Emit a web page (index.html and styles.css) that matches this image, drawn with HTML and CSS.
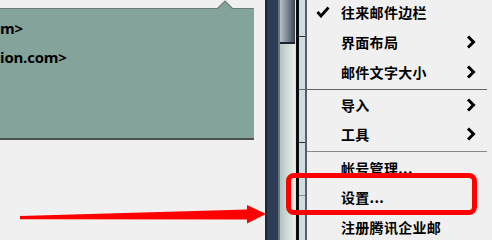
FILE: index.html
```html
<!DOCTYPE html>
<html>
<head>
<meta charset="utf-8">
<link rel="stylesheet" href="styles.css">
</head>
<body>
<div class="screen">
  <div class="left">
    <div class="topstrip">
      <svg class="caret" width="16" height="9" viewBox="0 0 16 9"><path d="M0.5 9 L8 1 L15.5 9 Z" fill="#84a39b"/><path d="M0.5 8.5 L8 1 L15.5 8.5" fill="none" stroke="#6e7c78" stroke-width="1.2"/></svg>
    </div>
    <div class="panel">
      <div class="addr">m&gt;</div>
      <div class="addr">ion.com&gt;</div>
    </div>
  </div>
  <div class="scroll"><div class="thumb"></div></div>
  <div class="edge"></div>
  <div class="menu">
    <div class="item r30"><svg class="check" width="14" height="12" viewBox="0 0 14 12"><path d="M1.5 6 L5 10 L12.5 1.5" fill="none" stroke="#000" stroke-width="2.8"/></svg><span class="label">往来邮件边栏</span></div>
    <div class="item r30"><span></span><span class="label">界面布局</span><svg class="chev" width="10" height="14" viewBox="0 0 10 14"><path d="M2 1.5 L7.5 7 L2 12.5" fill="none" stroke="#000" stroke-width="3"/></svg></div>
    <div class="item r29"><span></span><span class="label">邮件文字大小</span><svg class="chev" width="10" height="14" viewBox="0 0 10 14"><path d="M2 1.5 L7.5 7 L2 12.5" fill="none" stroke="#000" stroke-width="3"/></svg></div>
    <div class="sep sep1"></div>
    <div class="item r29"><span></span><span class="label">导入</span><svg class="chev" width="10" height="14" viewBox="0 0 10 14"><path d="M2 1.5 L7.5 7 L2 12.5" fill="none" stroke="#000" stroke-width="3"/></svg></div>
    <div class="item r29"><span></span><span class="label">工具</span><svg class="chev" width="10" height="14" viewBox="0 0 10 14"><path d="M2 1.5 L7.5 7 L2 12.5" fill="none" stroke="#000" stroke-width="3"/></svg></div>
    <div class="sep sep2"></div>
    <div class="item r29"><span></span><span class="label">帐号管理...</span></div>
    <div class="item r30"><span></span><span class="label">设置...</span></div>
    <div class="item r30"><span></span><span class="label">注册腾讯企业邮</span></div>
  </div>
</div>
<svg class="arrow" width="492" height="240" viewBox="0 0 492 240"><polygon points="20,216 247,209.5 247,205 266,214 247,223.5 247,219.5 20,219.3" fill="#ff0000"/></svg>
<div class="hilite"></div>
</body>
</html>
```

FILE: styles.css
```css
html, body {
  margin: 0;
  padding: 0;
  background: #f0f0f0;
}
body {
  width: 492px;
  height: 240px;
  overflow: hidden;
  position: relative;
}
.screen {
  display: flex;
  width: 492px;
  height: 240px;
}
.left {
  width: 265px;
  flex: none;
  background: #f0f0f0;
}
.topstrip {
  height: 8px;
  display: flex;
  align-items: flex-end;
}
.caret {
  display: block;
  margin-left: 217px;
  margin-bottom: -1px;
  position: relative;
}
.panel {
  width: 254px;
  height: 129px;
  background: #84a39b;
  border-top: 1px solid #6e7c78;
  border-bottom: 2px solid #4a524f;
  padding-top: 5px;
  box-sizing: content-box;
  height: 124px;
}
.addr {
  font-family: "Open Sans", "Noto Sans", sans-serif;
  font-weight: 700;
  font-size: 15px;
  line-height: 29px;
  color: #000;
  white-space: nowrap;
  letter-spacing: -0.2px;
}
.scroll {
  width: 31px;
  flex: none;
  background: linear-gradient(to right, #1c2634 0 2px, #2c3d55 2px 13px, #6b7880 13px 15px, #b2c4c0 15px, #c8d8d4 21px, #d8e4e1 26px, #e6eded 30px, #dfe3e3 30px 31px);
}
.thumb {
  margin-left: 15px;
  width: 15px;
  height: 42px;
  border-bottom: 2px solid #1d2328;
  background: linear-gradient(to right, #b4c2c8, #7f8d96 45%, #3c4652);
}
.edge {
  width: 6px;
  flex: none;
  border-left: 3px solid #0b0b0b;
  border-right: 2px solid #566064;
  background-color: #cedde2;
  background-image: linear-gradient(#303030, #303030), linear-gradient(#6c6c6c, #6c6c6c), linear-gradient(#303030, #303030), linear-gradient(#8a8a8a, #8a8a8a);
  background-size: 100% 1px;
  background-repeat: no-repeat;
  background-position: 0 36px, 0 89px, 0 142px, 0 195px;
}
.menu {
  flex: 1;
  margin-top: -3px;
  background: #f0f0f0;
  padding-right: 5px;
}
.item {
  display: grid;
  grid-template-columns: 34px 1fr 10px;
  align-items: center;
  padding-right: 11px;
  font-family: "Noto Sans CJK SC", "Noto Sans", sans-serif;
  font-weight: 700;
  font-size: 14px;
  color: #000;
}
.r30 { height: 30px; }
.r29 { height: 29px; }
.label {
  line-height: 20px;
  letter-spacing: 0.3px;
  white-space: nowrap;
}
.check {
  display: block;
  margin-left: 9px;
}
.chev {
  display: block;
}
.sep {
  height: 1px;
  background: #646464;
}
.sep1 {
  margin: 3px 0 0 0;
}
.sep2 {
  margin: 3px 0 1px 0;
  background: #8a8a8a;
}
.arrow {
  position: absolute;
  left: 0;
  top: 0;
  pointer-events: none;
}
.hilite {
  position: absolute;
  left: 286px;
  top: 173px;
  width: 181px;
  height: 32px;
  border: 5px solid #ff0000;
  border-radius: 8px;
  pointer-events: none;
}
```
